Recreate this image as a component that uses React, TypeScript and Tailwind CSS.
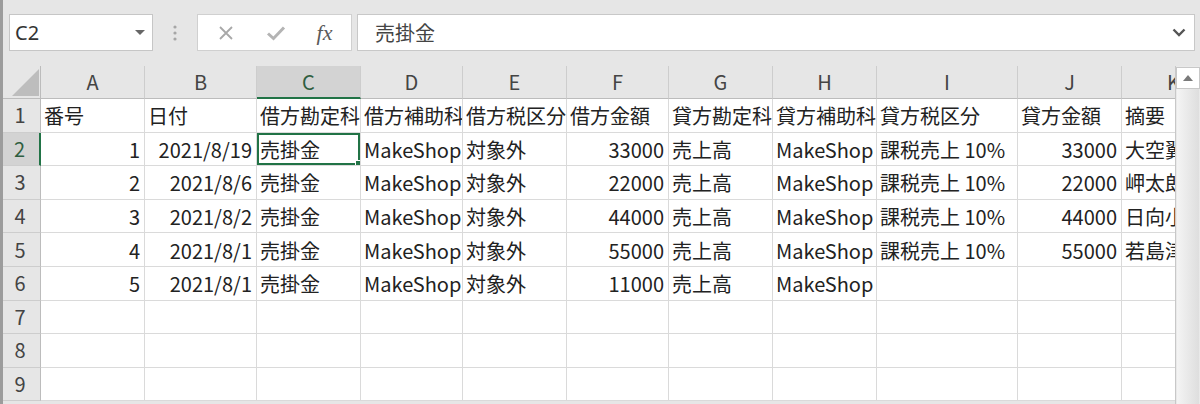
import React from "react";

const colW = [41, 104, 112, 104, 102, 104, 102, 104, 104, 141, 104, 104];
const letters = ["A", "B", "C", "D", "E", "F", "G", "H", "I", "J", "K"];

type Cell = { t: string; r?: boolean };

const header: Cell[] = [
  { t: "番号" },
  { t: "日付" },
  { t: "借方勘定科目" },
  { t: "借方補助科目" },
  { t: "借方税区分" },
  { t: "借方金額" },
  { t: "貸方勘定科目" },
  { t: "貸方補助科目" },
  { t: "貸方税区分" },
  { t: "貸方金額" },
  { t: "摘要" },
];

const data: [string, string, string, string, string][] = [
  ["1", "2021/8/19", "33000", "33000", "大空翼"],
  ["2", "2021/8/6", "22000", "22000", "岬太郎"],
  ["3", "2021/8/2", "44000", "44000", "日向小次郎"],
  ["4", "2021/8/1", "55000", "55000", "若島津健"],
  ["5", "2021/8/1", "11000", "", ""],
];

const rows: Cell[][] = [
  header,
  ...data.map(([n, d, a, b, k], i) => [
    { t: n, r: true },
    { t: d, r: true },
    { t: "売掛金" },
    { t: "MakeShop" },
    { t: "対象外" },
    { t: a, r: true },
    { t: "売上高" },
    { t: "MakeShop" },
    { t: i < 4 ? "課税売上 10%" : "" },
    { t: b, r: true },
    { t: k },
  ]),
  Array.from({ length: 11 }, () => ({ t: "" })),
  Array.from({ length: 11 }, () => ({ t: "" })),
  Array.from({ length: 11 }, () => ({ t: "" })),
];

const font = { fontFamily: '"Noto Sans CJK JP", "Noto Sans", sans-serif' };

export default function App() {
  return (
    <div className="w-[1200px] h-[404px] overflow-hidden bg-[#e6e6e6] flex flex-col border-l-[3px] border-[#9c9c9c]" style={font}>
      {/* formula bar */}
      <div className="h-[66px] shrink-0 flex items-start pt-[14px] pl-[6px] pr-[5px]">
        <div className="w-[144px] h-[37px] bg-white border border-[#c6c6c6] flex items-center justify-between pl-[5px] pr-[7px]">
          <span className="text-[20px] text-[#333] leading-none" style={{ fontFamily: '"Noto Sans", sans-serif' }}>C2</span>
          <svg width="10" height="6" viewBox="0 0 10 6"><path d="M0 0 L10 0 L5 5 Z" fill="#666" /></svg>
        </div>
        <div className="w-[44px] h-[37px] flex items-center justify-center">
          <svg width="4" height="16" viewBox="0 0 4 16">
            <circle cx="2" cy="2" r="1.6" fill="#a6a6a6" />
            <circle cx="2" cy="8" r="1.6" fill="#a6a6a6" />
            <circle cx="2" cy="14" r="1.6" fill="#a6a6a6" />
          </svg>
        </div>
        <div className="w-[155px] h-[37px] bg-white border border-[#d0d0d0] flex items-center">
          <div className="w-[56px] flex justify-center">
            <svg width="16" height="16" viewBox="0 0 16 16"><path d="M2 2 L14 14 M14 2 L2 14" stroke="#a8a8a8" strokeWidth="1.8" /></svg>
          </div>
          <div className="w-[44px] flex justify-center">
            <svg width="20" height="16" viewBox="0 0 20 16"><path d="M2 8.5 L7.5 13.5 L18 2.5" stroke="#b4b4b4" strokeWidth="3" fill="none" /></svg>
          </div>
          <div className="flex-1 flex justify-center">
            <span className="text-[22px] italic text-[#5a5a5a] leading-none" style={{ fontFamily: '"Liberation Serif", serif' }}>fx</span>
          </div>
        </div>
        <div className="ml-[5px] flex-1 h-[37px] bg-white border border-[#c8c8c8] flex items-center justify-between pl-[17px] pr-[8px]">
          <span className="text-[20px] text-[#444] leading-none">売掛金</span>
          <svg width="14" height="9" viewBox="0 0 14 9"><path d="M1.5 1.5 L7 7 L12.5 1.5" stroke="#555" strokeWidth="2.4" fill="none" /></svg>
        </div>
      </div>

      {/* sheet */}
      <div className="flex flex-1 min-h-0 -ml-[3px]">
        <div className="w-[1175px] overflow-hidden">
          {/* column header */}
          <div className="flex h-[33px]">
            <div className="shrink-0 w-[41px] h-full bg-[#e6e6e6] border-r border-b border-[#bcbcbc] relative">
              <svg className="absolute left-[12px] top-[3px]" width="27" height="27" viewBox="0 0 27 27"><path d="M27 0 L27 27 L0 27 Z" fill="#bdbdbd" /></svg>
            </div>
            {letters.map((l, i) => (
              <div
                key={l}
                className={
                  "shrink-0 h-full flex items-center justify-center text-[20px] border-r border-[#cdcdcd] " +
                  (l === "C" ? "bg-[#d3d3d3] text-[#2f5e40] border-b-2 border-b-[#217346]" : "bg-[#e6e6e6] text-[#444] border-b border-b-[#bcbcbc]")
                }
                style={{ width: colW[i + 1] }}
              >
                {l}
              </div>
            ))}
          </div>
          {rows.map((row, ri) => (
            <div key={ri} className="flex h-[33.6px]">
              <div
                className={
                  "shrink-0 w-[41px] h-full flex items-center justify-center text-[20px] border-b border-[#cdcdcd] " +
                  (ri === 1 ? "bg-[#d3d3d3] text-[#2f5e40] border-r-2 border-r-[#217346]" : "bg-[#e6e6e6] text-[#444] border-r border-r-[#bcbcbc]")
                }
              >
                {ri + 1}
              </div>
              {row.map((c, ci) => (
                <div
                  key={ci}
                  className={
                    "shrink-0 h-full bg-white border-r border-b border-[#dadada] flex items-center pl-[3px] pr-[4px] text-[20px] text-[#222] whitespace-nowrap overflow-hidden relative " +
                    (c.r ? "justify-end" : "justify-start")
                  }
                  style={{ width: colW[ci + 1] }}
                >
                  <span className="block pt-[2px]">{c.t}</span>
                  {ri === 1 && ci === 2 && (
                    <div className="absolute left-0 top-0 right-0 bottom-0 border-2 border-[#217346] pointer-events-none">
                      <div className="absolute -right-[3px] -bottom-[3px] w-[6px] h-[6px] bg-[#217346] border border-white" />
                    </div>
                  )}
                </div>
              ))}
            </div>
          ))}
        </div>
        {/* scrollbar */}
        <div className="w-[25px] flex flex-col bg-[#e9e9e9] border-l border-[#c8c8c8]">
          <div className="h-[22px] mt-[1px] bg-white border border-[#c8c8c8] flex items-center justify-center">
            <svg width="10" height="6" viewBox="0 0 10 6"><path d="M0 6 L10 6 L5 0 Z" fill="#7a7a7a" /></svg>
          </div>
          <div className="flex-1 mx-[1px] bg-gradient-to-r from-[#f4f4f4] to-[#dedede]" />
        </div>
      </div>
    </div>
  );
}
